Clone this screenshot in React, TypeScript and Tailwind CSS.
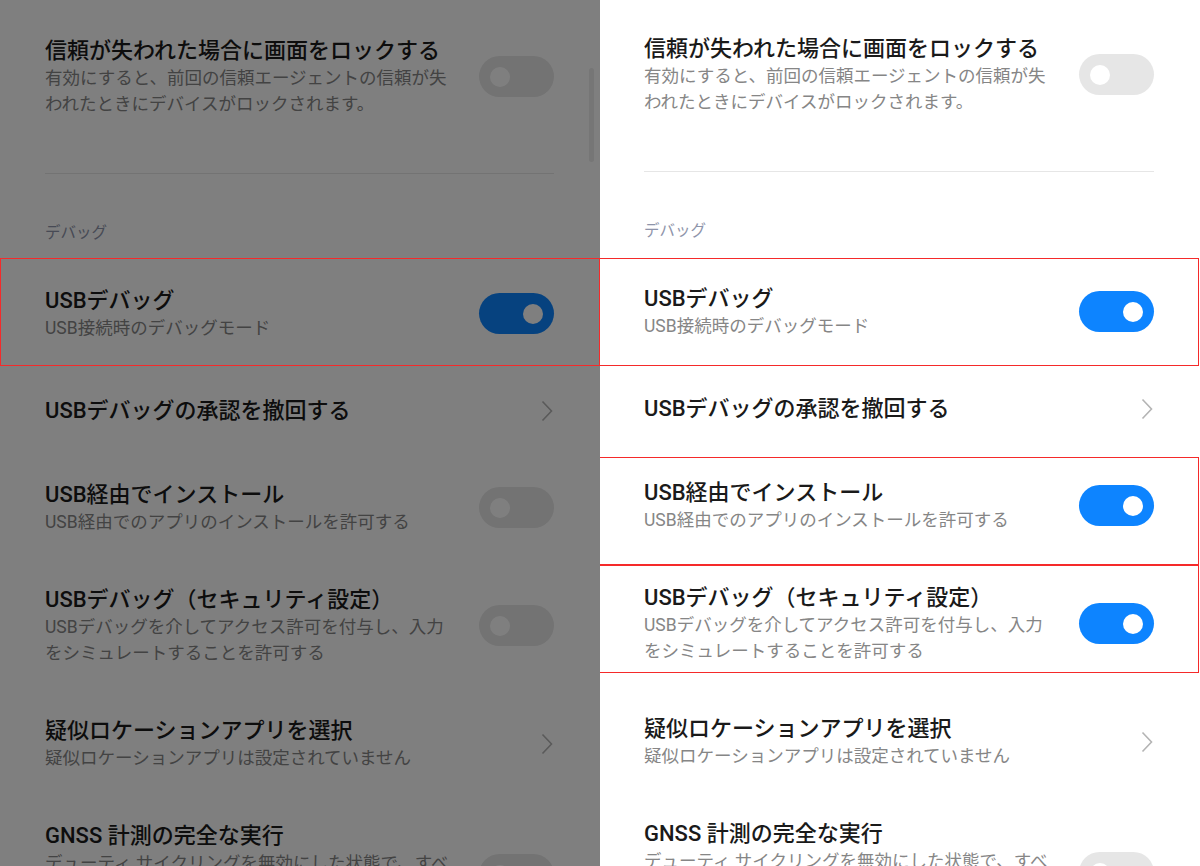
import React from "react";

type Item = {
  title: string;
  sub?: string;
  control: "on" | "off" | "chevron";
  first?: boolean;
};

const font = {
  fontFamily: 'Roboto, "Noto Sans CJK JP", "Noto Sans", sans-serif',
};

const Toggle = ({ on }: { on: boolean }) => (
  <div
    className={`flex h-[41px] w-[75px] shrink-0 items-center rounded-full px-[11px] ${
      on ? "justify-end bg-[#0d84ff]" : "justify-start bg-[#e6e6e6]"
    }`}
  >
    <div className="h-5 w-5 rounded-full bg-white" />
  </div>
);

const Chevron = () => (
  <svg width="12" height="22" viewBox="0 0 12 22" className="mr-px shrink-0">
    <path d="M1.5 1.5 L10.5 11 L1.5 20.5" fill="none" stroke="#b4b4b4" strokeWidth="1.6" />
  </svg>
);

const Row = ({ item }: { item: Item }) => (
  <div
    className={`flex items-center pl-[44px] pr-[46px] ${
      item.first ? "pt-[34px] pb-[25px]" : item.sub ? "py-[25px]" : "min-h-[89px]"
    }`}
  >
    <div className="min-w-0 flex-1 pr-5">
      <div className="text-[22px] leading-[29px] font-medium text-[#1a1a1a]">{item.title}</div>
      {item.sub && <div className="text-[17.5px] leading-[26px] text-[#868686]">{item.sub}</div>}
    </div>
    {item.control === "chevron" ? <Chevron /> : <Toggle on={item.control === "on"} />}
  </div>
);

const Panel = ({ states, dimmed }: { states: ("on" | "off")[]; dimmed: boolean }) => {
  const top: Item = {
    title: "信頼が失われた場合に画面をロックする",
    sub: "有効にすると、前回の信頼エージェントの信頼が失われたときにデバイスがロックされます。",
    control: "off",
    first: true,
  };
  const items: Item[] = [
    { title: "USBデバッグ", sub: "USB接続時のデバッグモード", control: states[0] },
    { title: "USBデバッグの承認を撤回する", control: "chevron" },
    { title: "USB経由でインストール", sub: "USB経由でのアプリのインストールを許可する", control: states[1] },
    {
      title: "USBデバッグ（セキュリティ設定）",
      sub: "USBデバッグを介してアクセス許可を付与し、入力をシミュレートすることを許可する",
      control: states[2],
    },
    { title: "疑似ロケーションアプリを選択", sub: "疑似ロケーションアプリは設定されていません", control: "chevron" },
    {
      title: "GNSS 計測の完全な実行",
      sub: "デューティ サイクリングを無効にした状態で、すべての GNSS コンステレーションと周波数をトラッキングします",
      control: "off",
    },
  ];
  const boxes = dimmed ? ["top-[258px]"] : ["top-[258px]", "top-[457px]", "top-[565px]"];

  return (
    <div className="relative h-[866px] w-[600px] shrink-0 overflow-hidden bg-white">
      <div className={dimmed ? "pt-[2px] pl-px" : ""}>
        <Row item={top} />
        <div className="mt-[31px] ml-[44px] mr-[46px] h-px bg-[#e6e6e6]" />
        <div className="mt-[49px] mb-[18px] pl-[44px] text-[15.5px] leading-[20px] text-[#8e94aa]">デバッグ</div>
        {items.map((it, i) => (
          <Row key={i} item={it} />
        ))}
      </div>
      {dimmed && (
        <>
          <div className="absolute left-[589px] top-[68px] h-[94px] w-[5px] rounded-full bg-[#ececec]" />
          <div className="absolute inset-0 bg-black/50" />
        </>
      )}
      {boxes.map((b) => (
        <div
          key={b}
          className={`absolute ${b} h-[108px] border-[1.5px] border-[#f52a2a] ${
            dimmed ? "left-0 w-[600px]" : "-left-px w-[600px]"
          }`}
        />
      ))}
    </div>
  );
};

const App: React.FC = () => {
  return (
    <div className="flex h-[866px] w-[1200px] overflow-hidden bg-white" style={font}>
      <Panel dimmed states={["on", "off", "off"]} />
      <Panel dimmed={false} states={["on", "on", "on"]} />
    </div>
  );
};

export default App;
